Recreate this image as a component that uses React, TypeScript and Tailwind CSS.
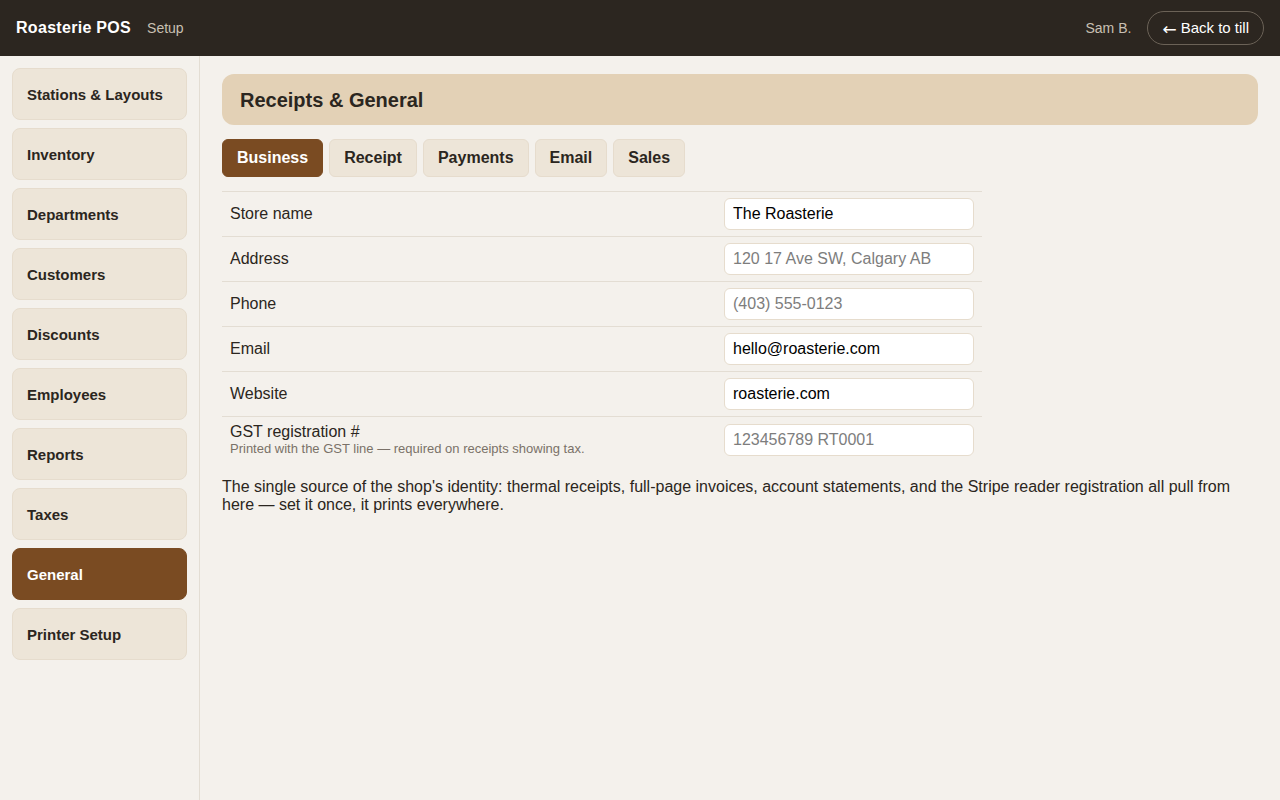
import React from "react";

const navItems = [
  "Stations & Layouts",
  "Inventory",
  "Departments",
  "Customers",
  "Discounts",
  "Employees",
  "Reports",
  "Taxes",
  "General",
  "Printer Setup",
];

const tabs = ["Business", "Receipt", "Payments", "Email", "Sales"];

const fields = [
  { label: "Store name", value: "The Roasterie" },
  { label: "Address", placeholder: "120 17 Ave SW, Calgary AB" },
  { label: "Phone", placeholder: "(403) 555-0123" },
  { label: "Email", value: "hello@roasterie.com" },
  { label: "Website", value: "roasterie.com" },
  {
    label: "GST registration #",
    hint: "Printed with the GST line — required on receipts showing tax.",
    placeholder: "123456789 RT0001",
  },
];

const App = () => {
  return (
    <div className="flex h-[800px] flex-col bg-[#f4f1ec] font-['Liberation_Sans',Arial,sans-serif] text-[#2b2620]">
      <header className="flex h-14 shrink-0 items-center justify-between bg-[#2c2620] pl-4 pr-4">
        <div className="flex items-baseline gap-4">
          <span className="text-base font-bold tracking-[0.3px] text-white">Roasterie POS</span>
          <span className="text-sm text-[#c9c0b3]">Setup</span>
        </div>
        <div className="flex items-center gap-4">
          <span className="text-sm text-[#c9c0b3]">Sam B.</span>
          <button className="flex h-[34px] items-center gap-[4px] rounded-full border border-[#6b6257] pl-[14px] pr-[14px] text-[15px] text-white">
            <span className="pt-[2px] font-['DejaVu_Sans',sans-serif] text-[17px] leading-none">←</span>
            <span>Back to till</span>
          </button>
        </div>
      </header>

      <div className="flex min-h-0 flex-1">
        <aside className="flex w-[200px] shrink-0 flex-col gap-2 border-r border-[#e3ddd3] p-3">
          {navItems.map((item) => (
            <div
              key={item}
              className={
                item === "General"
                  ? "flex h-[52px] items-center rounded-lg border border-[#7a4b22] bg-[#7a4b22] px-[14px] pt-[2px] text-[15px] font-bold text-white"
                  : "flex h-[52px] items-center rounded-lg border border-[#e6dccd] bg-[#ede5d8] px-[14px] pt-[2px] text-[15px] font-bold text-[#2b2620]"
              }
            >
              {item}
            </div>
          ))}
        </aside>

        <main className="flex-1 px-[22px] pt-[18px]">
          <div className="flex h-[51px] items-center rounded-xl bg-[#e3d1b6] px-[18px]">
            <h1 className="text-xl font-bold">Receipts & General</h1>
          </div>

          <div className="mt-[14px] flex gap-[6px]">
            {tabs.map((tab) => (
              <button
                key={tab}
                className={
                  tab === "Business"
                    ? "h-[38px] rounded-md border border-[#7a4b22] bg-[#7a4b22] px-[14px] text-base font-bold text-white"
                    : "h-[38px] rounded-md border border-[#e6dccd] bg-[#ede5d8] px-[14px] text-base font-bold text-[#2b2620]"
                }
              >
                {tab}
              </button>
            ))}
          </div>

          <div className="mt-[14px] w-[760px]">
            {fields.map((f) => (
              <div
                key={f.label}
                className="flex min-h-[45px] items-center justify-between border-t border-[#e3ddd3] px-2 py-[6px]"
              >
                <div className="flex flex-col">
                  <span className="text-base leading-[18px]">{f.label}</span>
                  {f.hint && (
                    <span className="text-[13px] leading-[16px] text-[#7a7168]">
                      {f.hint}
                    </span>
                  )}
                </div>
                <input
                  className="h-[32px] w-[250px] rounded-md border border-[#e6dccd] bg-white px-2 text-base text-black outline-none placeholder:text-[#7d7d7d]"
                  defaultValue={f.value}
                  placeholder={f.placeholder}
                />
              </div>
            ))}
          </div>

          <p className="mt-[15px] text-base leading-[18px]">
            The single source of the shop's identity: thermal receipts, full-page invoices, account
            statements, and the Stripe reader registration all pull from here — set it once, it
            prints everywhere.
          </p>
        </main>
      </div>
    </div>
  );
};

export default App;
